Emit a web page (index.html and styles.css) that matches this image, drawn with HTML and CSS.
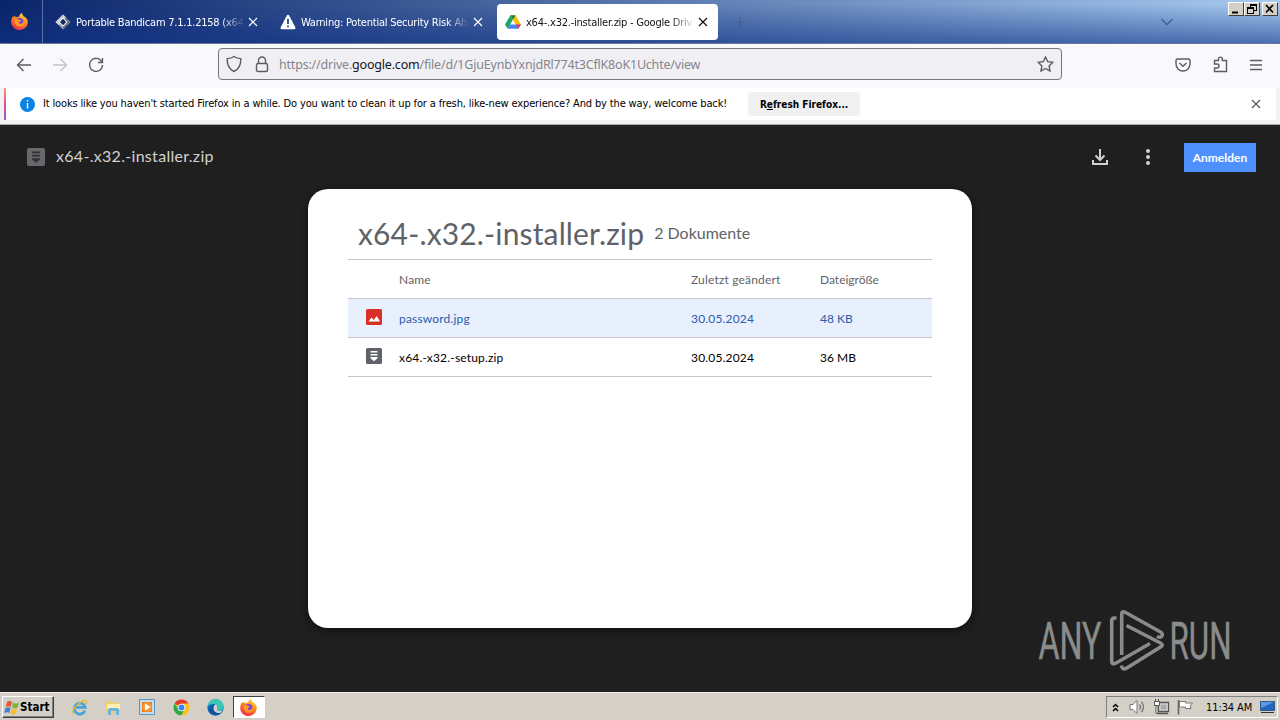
FILE: index.html
```
<!DOCTYPE html>
<html lang="de">
<head>
  <meta charset="UTF-8">
  <title>x64-.x32.-installer.zip - Google Drive</title>
  <link rel="stylesheet" href="styles.css">
</head>
<body>

  <!-- Shared icon shapes -->
  <svg class="defs" width="0" height="0">
    <defs>
      <linearGradient id="fire" x1="0.8" y1="0" x2="0.3" y2="1">
        <stop offset="0" stop-color="#ffe33c"/>
        <stop offset="0.45" stop-color="#ff8a1c"/>
        <stop offset="1" stop-color="#f02a50"/>
      </linearGradient>
      <symbol id="firefox" viewBox="0 0 16 16">
        <path fill="url(#fire)" d="M10 0c.8 1 1.4 1.800 1.500 2.800C14.500 4 16 6.500 15.800 9c-.3 4-3.600 7-7.700 7C3.700 16 .2 12.700.2 8.400c0-2 .6-4 1.800-5.600l.2 1.300L4 2.300l.3 1.900c1-.6 2.200-.7 3.200-.4C7.600 2.200 8.600.8 10 0z"/>
        <circle cx="8" cy="8.600" r="3.800" fill="#7a45d8"/>
        <path fill="#ff9820" d="M3.500 6.500c1.500-1.300 3-.8 4.400.1l1.500.2c-.2 1-1.400 1.200-2 1.600-.2 1.300.8 2 2.200 1.700 1.500-.3 2.300-1.500 2.200-3C13 8.800 12.400 13 8.400 13c-3.300 0-5.400-3-4.900-6.500z"/>
      </symbol>
      <symbol id="close" viewBox="0 0 10 10">
        <path d="M1 1l8 8M9 1L1 9" fill="none" stroke="currentColor" stroke-width="1.200"/>
      </symbol>
      <symbol id="zip" viewBox="0 0 16 16">
        <rect width="16" height="16" rx="1.500"/>
        <path class="zip-mark" d="M4.500 3h7v1.600h-7zM4.500 6h7v1.600h-7zM4.500 9h7v1.200L8 13.200l-3.500-3z"/>
      </symbol>
    </defs>
  </svg>

  <!-- Tab strip -->
  <header class="tabstrip">
    <div class="firefox-view"><svg width="17" height="17"><use href="#firefox"/></svg></div>
    <div class="tab">
      <svg class="favicon" viewBox="0 0 16 16">
        <path d="M8 .5L15.500 8 8 15.500.5 8z" fill="#9ea4b2"/>
        <path d="M8 .5L15.500 8 8 15.500z" fill="#6d7484"/>
        <path d="M8 .5L.5 8l3 3L11 3.500z" fill="#c9cdd6"/>
        <path d="M8 3.500L12.500 8 8 12.500 3.500 8z" fill="#fff"/>
        <path d="M8 4.800L11.200 8 8 11.200 4.800 8z" fill="#14295f"/>
      </svg>
      <span class="title">Portable Bandicam 7.1.1.2158 (x64</span>
      <svg class="x"><use href="#close"/></svg>
    </div>
    <div class="tab">
      <svg class="favicon" viewBox="0 0 16 16">
        <path d="M8 .8c.7 0 1 .3 1.300.9l6 11.500c.5 1 0 2-1.100 2H1.800c-1.100 0-1.600-1-1.100-2l6-11.500C7 1.100 7.300.8 8 .8z" fill="#fff"/>
        <path d="M8 5v5M8 11.500v1.800" stroke="#1c3a80" stroke-width="1.700"/>
      </svg>
      <span class="title">Warning: Potential Security Risk Ah</span>
      <svg class="x"><use href="#close"/></svg>
    </div>
    <div class="tab active">
      <svg class="favicon" viewBox="0 0 16 16">
        <path d="M5.500 1.200L0 10.600l2.700 4.200 5.300-9.200z" fill="#20a464"/>
        <path d="M5.500 1.200h5L16 10.600h-5.300z" fill="#fbbc04"/>
        <path d="M5.500 1.200h5L8 5.600z" fill="#188038"/>
        <path d="M5 10.600h11l-2.700 4.200H2.700z" fill="#4285f4"/>
        <path d="M10.800 10.600H16l-2.700 4.200z" fill="#ea4335"/>
      </svg>
      <span class="title">x64-.x32.-installer.zip - Google Driv</span>
      <svg class="x"><use href="#close"/></svg>
    </div>
    <svg class="plus" width="10" height="10"><path d="M5 0v10M0 5h10" stroke="#4a5f90" stroke-width="1.200"/></svg>
    <svg class="all-tabs" width="12" height="8"><path d="M.5 1L6 6.500 11.500 1" fill="none" stroke="#48669c" stroke-width="1.600"/></svg>
    <div class="window-buttons">
      <span class="wbtn"><svg width="14" height="12"><path d="M3 8.500h6v2H3z"/></svg></span>
      <span class="wbtn"><svg width="14" height="12"><path d="M5 1h7v7h-3V11H2V4h3zM6 3v1h3v3h2V3zM3 6v4h5V6z" fill-rule="evenodd"/></svg></span>
      <span class="wbtn last"><svg width="14" height="12"><path d="M3 2l7 7.500M10 2L3 9.500" stroke="#000" stroke-width="1.700"/></svg></span>
    </div>
  </header>

  <!-- Navigation toolbar -->
  <nav class="toolbar">
    <div class="nav-buttons">
      <svg width="16" height="14"><path d="M15 7H1.500M7.500 1L1.500 7l6 6"/></svg>
      <svg class="off" width="16" height="14"><path d="M1 7h13.500M8.500 1l6 6-6 6"/></svg>
      <svg width="16" height="16"><path d="M13.600 4.500A6.500 6.500 0 1 0 14.500 8M14.500 1v4.500H10"/></svg>
    </div>
    <div class="urlbar">
      <svg width="16" height="18"><path d="M8 1.500C6 3 3.500 3.500 1.200 3.600 1 9.500 2.500 14 8 16.500c5.500-2.500 7-7 6.800-12.900C12.500 3.500 10 3 8 1.500z"/></svg>
      <svg class="lock" width="14" height="17"><rect x="1.500" y="7.500" width="11" height="8" rx="1.500"/><path d="M3.500 7.500V4.500a3.500 3.500 0 0 1 7 0v3"/></svg>
      <span class="url">https://drive.<b>google.com</b>/file/d/1GjuEynbYxnjdRl774t3CflK8oK1Uchte/view</span>
      <svg class="star" width="17" height="16" viewBox="0 0 17 16"><path d="M8.500 1l2.200 4.700 5.100.6-3.700 3.600.9 5.100-4.500-2.500L4 15l.9-5.100L1.200 6.300l5.100-.6z"/></svg>
    </div>
    <div class="tools">
      <svg width="16" height="14"><path d="M2.500 1h11a1.500 1.500 0 0 1 1.500 1.500V6a7 7 0 0 1-14 0V2.500A1.500 1.500 0 0 1 2.500 1zM4.500 5L8 8.300 11.500 5"/></svg>
      <svg width="15" height="17"><path d="M5.500 4.500V3a1.900 1.900 0 0 1 3.800 0v1.500h4.200v11H1.500V12H4a2 2 0 0 0 0-4H1.500V4.500z"/></svg>
      <svg width="12" height="12"><path d="M0 1.500h12M0 6h12M0 10.500h12"/></svg>
    </div>
  </nav>

  <!-- Notification bar -->
  <div class="notice-wrap">
    <div class="notice">
      <svg width="15" height="15"><circle cx="7.500" cy="7.500" r="7.500" fill="#0a84e0"/><path d="M7.500 3v1.500M7.500 6v5.500" stroke="#fff" stroke-width="1.300"/></svg>
      <span class="message">It looks like you haven't started Firefox in a while. Do you want to clean it up for a fresh, like-new experience? And by the way, welcome back!</span>
      <button><span>R<u>e</u>fresh Firefox...</span></button>
      <svg class="dismiss" width="10" height="10"><use href="#close"/></svg>
    </div>
  </div>

  <!-- Drive viewer -->
  <main>
    <div class="viewer-bar">
      <svg class="zip-dark" width="18" height="18"><use href="#zip"/></svg>
      <span class="file-name">x64-.x32.-installer.zip</span>
      <svg class="download" width="16" height="16"><path d="M8 0v11M3.500 6.500L8 11l4.500-4.500M1 11v4h14v-4" fill="none" stroke="#d0d0d0" stroke-width="2"/></svg>
      <svg class="more" width="4" height="16" fill="#d0d0d0"><circle cx="2" cy="2" r="2"/><circle cx="2" cy="8" r="2"/><circle cx="2" cy="14" r="2"/></svg>
      <button class="signin"><span>Anmelden</span></button>
    </div>

    <section class="card">
      <div class="card-head">
        <h1>x64-.x32.-installer.zip</h1>
        <span class="count">2 Dokumente</span>
      </div>
      <div class="row head">
        <span></span><span>Name</span><span>Zuletzt geändert</span><span class="tight">Dateigröße</span>
      </div>
      <div class="row selected">
        <svg width="16" height="16"><rect width="16" height="16" rx="1.500" fill="#d93025"/><path d="M2.500 12.500l3-4 2.200 2.500 3-4 3.300 5.500z" fill="#fff"/></svg>
        <span>password.jpg</span><span>30.05.2024</span><span class="tight">48 KB</span>
      </div>
      <div class="row">
        <svg class="zip-light" width="16" height="16"><use href="#zip"/></svg>
        <span>x64.-x32.-setup.zip</span><span>30.05.2024</span><span class="tight">36 MB</span>
      </div>
    </section>

    <!-- Watermark over the page -->
    <svg class="watermark" width="200" height="64" viewBox="0 0 200 64">
      <text x="2.500" y="50" textLength="63" lengthAdjust="spacingAndGlyphs">ANY</text>
      <g fill="none" stroke="#8b8b8b" stroke-width="3.600" stroke-linejoin="round">
        <path d="M80.500 9h-2q-2.800 0-2.800 3v40q0 4 4 2.200L114 34.500"/>
        <path d="M85.700 46V5q0-3.500 3.500-1.700L124.500 23q3 2 1 4.500-1.500 1.500-4.500-.3"/>
        <path d="M90.500 16.500L124.500 34q3.500 2 0 4L90 59.500q-4 1.500-4.500-3"/>
      </g>
      <text x="133.500" y="50" textLength="62" lengthAdjust="spacingAndGlyphs">RUN</text>
    </svg>
  </main>

  <!-- Taskbar -->
  <footer class="taskbar">
    <div class="start">
      <svg width="16" height="15" viewBox="0 0 16 15"><path d="M3 2q3-2 5 0L6.800 7q-2-1.500-5 0z" fill="#e8582a"/><path d="M9 2.500q3 2 6 0L13.600 7.500q-3 2-5.500 0z" fill="#7db43c"/><path d="M1.500 8q3-1.500 5 0l-1.300 5q-2-1.500-5 0z" fill="#3f83d2"/><path d="M7.600 8.500q3 2 5.600 0L12 13.500q-3 2-5.700 0z" fill="#f6c02c"/></svg>
      <span>Start</span>
    </div>
    <div class="launch">
      <svg width="17" height="17"><path d="M14 11.500A5.500 5.500 0 1 1 14.200 8.300H5" fill="none" stroke="#42a5dc" stroke-width="2.700"/><path d="M2 15C-1 12 9 1 15 1.500q2 1-1 4" fill="none" stroke="#e8b83a" stroke-width="1.300"/></svg>
      <svg width="17" height="17"><path d="M1 2h5l1 1.500h8V14H1z" fill="#edcf73"/><path d="M2 5h13v5H2z" fill="#fff0b0"/><path d="M3 16v-5q0-2 2-2h7q2 0 2 2v5h-3v-4H6v4z" fill="#69b5dc"/></svg>
      <svg width="17" height="17"><path d="M.5.500h15v15H.5z" fill="#c8dcec" stroke="#5a93c0"/><path d="M3 3h10v10H3z" fill="#f08020"/><circle cx="8" cy="8" r="4.500" fill="#f59a35"/><path d="M6 4.500L11.500 8 6 11.500z" fill="#fff"/></svg>
      <svg width="17" height="17" viewBox="0 0 16 16"><circle cx="8" cy="8" r="7.500" fill="#fbc116"/><path d="M8 8L1.500 4.300A7.500 7.500 0 0 1 14.500 4.300H8z" fill="#e33b2e"/><path d="M1.500 4.300A7.500 7.500 0 0 0 7.500 15.500L11 9.800 5 9.500z" fill="#2da94f"/><circle cx="8" cy="8" r="3.600" fill="#fff"/><circle cx="8" cy="8" r="2.800" fill="#3e82f0"/></svg>
      <svg width="17" height="17" viewBox="0 0 16 16"><circle cx="8" cy="8" r="7.700" fill="#0c6fbd"/><path d="M.5 7C1.500 2.500 4.500.3 8 .3c4.500 0 7.700 3 7.700 6.700 0 2.700-2.300 4-4.600 4-1.500 0-2.400-.6-1.500-1.700C11 7 9 4.600 6 4.600 3.500 4.600 1.500 5.500.5 7z" fill="#39c6b4"/><path d="M9.500 9.300C8.500 11 12 12 15 10l-2 3c-4 1-7.500-1-7-5 .2-1.400 1-2.400 2-3 2 1 2.300 3 1.500 4.300z" fill="#d4d0c8"/><path d="M6 8c-.5 4 3 6 7 5-4 4-10 2.500-11-2C1.500 8 4 5 8 5 6.800 5.500 6.200 6.600 6 8z" fill="#1353a0"/></svg>
    </div>
    <div class="task"><svg width="17" height="17"><use href="#firefox"/></svg></div>
    <div class="tray">
      <svg width="7" height="9"><path d="M1 4l2.500-2.500L6 4M1 8l2.500-2.500L6 8" fill="none" stroke="#000" stroke-width="1.500"/></svg>
      <svg class="speaker" width="17" height="16"><path d="M1 5.500h3L8 1.500v13L4 10.500H1z" fill="#fff" stroke="#777"/><path d="M10.500 5.500q2 2.500 0 5M12.500 3q4 5 0 10" fill="none" stroke="#777" stroke-width="1.300"/></svg>
      <svg class="network" width="17" height="16"><path d="M5.500 3.500h10v9h-10zM5 14.500h10" fill="#ddd" stroke="#555" stroke-width="1.300"/><path d="M7.500 5.500h6v5h-6z" fill="#aaa"/><path d="M1.500 2.500h5v4h-5zM2.500 0v2M5.500 0v2M3 6.500h2v8H3z" fill="#fff" stroke="#555"/></svg>
      <svg class="flag" width="16" height="16"><path d="M1.500 1v14.500" stroke="#666" stroke-width="1.600"/><path d="M2.500 2.500h6v1.500H15.500L13 7l1 2.500H8.500V8h-6z" fill="#fff" stroke="#777"/></svg>
      <span class="clock">11:34 AM</span>
      <svg class="desktop" width="15" height="13"><path d="M.5.500h14v9H.5z" fill="#2564bb" stroke="#31598e"/><path d="M1 1h13L1 7z" fill="#5b9ae4"/><path d="M1 11.500h13" stroke="#333"/></svg>
    </div>
  </footer>

</body>
</html>
```
FILE: styles.css
```
* {
  box-sizing: border-box;
}
body {
  margin: 0;
  width: 1280px;
  height: 720px;
  overflow: hidden;
  display: flex;
  flex-direction: column;
  font-family: "DejaVu Sans Condensed", "DejaVu Sans", sans-serif;
  font-size: 11px;
  color: #000;
}
svg {
  display: block;
  flex: none;
}
.defs {
  position: absolute;
}
span, h1 {
  white-space: nowrap;
}
button {
  border: 0;
  padding: 0;
  font-family: inherit;
}

/* Tab strip */
.tabstrip {
  height: 44px;
  flex: none;
  display: flex;
  background: linear-gradient(to bottom, rgba(16, 50, 125, 0) 10%, rgba(16, 50, 135, 0.6) 100%), linear-gradient(to right, #0a246a, #a6caf0);
  border-bottom: 1px solid #6a7896;
}
.firefox-view {
  width: 43px;
  padding: 13px 0 0 11px;
  border-right: 1px solid #5870a5;
}
.tab {
  width: 221px;
  height: 36px;
  margin: 4px 0 0 4px;
  padding: 0 10px 0 8px;
  display: flex;
  align-items: center;
  color: #fff;
}
.tab.active {
  background: #fff;
  color: #111;
  border-radius: 4px;
}
.favicon {
  width: 16px;
  height: 16px;
  margin-right: 5px;
}
.title {
  width: 169px;
  padding-top: 1px;
  letter-spacing: -0.23px;
  -webkit-mask-image: linear-gradient(to right, #000 145px, transparent 169px);
  mask-image: linear-gradient(to right, #000 145px, transparent 169px);
}
.x {
  width: 10px;
  height: 10px;
  margin-left: 3px;
}
.plus {
  margin: 17px 0 0 17px;
}
.all-tabs {
  margin: 18px 0 0 auto;
}
.window-buttons {
  display: flex;
  margin: 2px 2px 0 55px;
}
.wbtn {
  width: 16px;
  height: 14px;
  background: #d4d0c8;
  border: 1px solid;
  border-color: #fff #404040 #404040 #fff;
}
.wbtn.last {
  margin-left: 2px;
}

/* Toolbar */
.toolbar {
  height: 44px;
  flex: none;
  display: flex;
  background: #f9f9fb;
}
.toolbar svg {
  fill: none;
  stroke: #5b5b66;
  stroke-width: 1.4;
}
.nav-buttons {
  width: 218px;
  display: flex;
  align-items: center;
  gap: 20px;
  padding: 0 0 3px 16px;
}
.nav-buttons .off {
  stroke: #c3c3c8;
}
.urlbar {
  width: 844px;
  height: 32px;
  margin-top: 4px;
  padding: 0 7px;
  display: flex;
  align-items: center;
  background: #f0f0f4;
  border: 1px solid #74747c;
  border-radius: 4px;
}
.lock {
  margin-left: 13px;
}
.url {
  margin-left: 10px;
  font-size: 12.5px;
  font-family: "Noto Sans", sans-serif;
  letter-spacing: -0.2px;
  color: #85858b;
}
.url b {
  font-weight: normal;
  color: #15141a;
}
.star {
  margin-left: auto;
}
.tools {
  margin: 0 18px 3px auto;
  display: flex;
  align-items: center;
  gap: 22px;
}

/* Notification */
.notice-wrap {
  height: 37px;
  flex: none;
  padding: 0 4px;
  background: #f2f2f4;
  border-bottom: 1px solid #aaa;
}
.notice {
  height: 32px;
  padding: 0 15px 0 14px;
  display: flex;
  align-items: center;
  background: #fff;
  border-left: 2px solid;
  border-image: linear-gradient(#f39a78, #e04e9a, #9060d0) 1;
}
.message {
  margin: 0 0 2px 8px;
  letter-spacing: -0.145px;
}
.notice button {
  width: 112px;
  height: 24px;
  margin-left: 21px;
  background: #f0f0f1;
  border-radius: 4px;
  font-size: 10px;
  font-weight: bold;
}
.dismiss {
  margin-left: auto;
  color: #5b5b66;
}

/* Drive viewer */
main {
  height: 567px;
  flex: none;
  position: relative;
  background: #1f1f1f;
  font-family: Lato, sans-serif;
}
.viewer-bar {
  height: 64px;
  padding: 0 24px 0 27px;
  display: flex;
  align-items: center;
}
.zip-dark {
  fill: #66686b;
  --mark: #303236;
}
.zip-light {
  fill: #5f6368;
  --mark: #fff;
}
.zip-mark {
  fill: var(--mark);
}
.file-name {
  margin: 0 0 3px 11px;
  font-size: 16px;
  letter-spacing: 0.3px;
  color: #d2d2d2;
}
.download {
  margin-left: auto;
}
.more {
  margin: 0 34px 0 38px;
}
.signin {
  width: 72px;
  height: 29px;
  background: #4d90fe;
  color: #fff;
  font-size: 12px;
  font-weight: bold;
}
.card {
  width: 664px;
  height: 439px;
  margin: 0 auto;
  padding: 20px 40px;
  background: #fff;
  border-radius: 20px;
  box-shadow: 0 3px 10px rgba(0, 0, 0, 0.5);
}
.card-head {
  height: 51px;
  padding: 0 0 3px 10px;
  display: flex;
  align-items: center;
  border-bottom: 1px solid #c7c7c7;
  color: #5f6368;
}
h1 {
  margin: 0;
  font-size: 30px;
  font-weight: normal;
  letter-spacing: 0.14px;
}
.count {
  margin-left: 10px;
  font-size: 16px;
}
.row {
  height: 39px;
  padding: 1px 0 0 18px;
  display: grid;
  grid-template-columns: 33px 292px 129px 1fr;
  align-items: center;
  border-bottom: 1px solid #c7c7c7;
  font-size: 12px;
  letter-spacing: 0.17px;
}
.row svg {
  margin-bottom: 3px;
}
.row.head {
  color: #5f6368;
}
.row.selected {
  background: #e8f0fe;
  color: #2a5caa;
}
.row .tight {
  letter-spacing: 0;
}
.watermark {
  position: absolute;
  left: 1036px;
  top: 484px;
}
.watermark text {
  font-family: Roboto, sans-serif;
  font-size: 52px;
  fill: #8b8b8b;
  stroke: #8b8b8b;
  stroke-width: 0.5;
}

/* Taskbar */
.taskbar {
  height: 28px;
  flex: none;
  display: flex;
  align-items: center;
  padding: 1px 2px 0;
  background: #d4d0c8;
  border-top: 1px solid #f4f2ec;
}
.start {
  width: 52px;
  height: 22px;
  padding-left: 1px;
  display: flex;
  align-items: center;
  border: 1px solid;
  border-color: #fff #404040 #404040 #fff;
  box-shadow: inset -1px -1px #808080;
  font-weight: bold;
  font-size: 11.5px;
}
.launch {
  display: flex;
  gap: 17px;
  margin-left: 17px;
}
.task {
  width: 32px;
  height: 22px;
  margin-left: 9px;
  padding: 2px 0 0 6px;
  background: #fff;
  border: 1px solid;
  border-color: #404040 #fff #fff #404040;
}
.tray {
  width: 172px;
  height: 22px;
  margin-left: auto;
  padding-left: 5px;
  display: flex;
  align-items: center;
  border: 1px solid;
  border-color: #808080 #fff #fff #808080;
}
.speaker {
  margin-left: 10px;
}
.network {
  margin-left: 7px;
}
.flag {
  margin-left: 7px;
}
.clock {
  margin-left: 13px;
  letter-spacing: -0.1px;
}
.desktop {
  margin: 0 2px 0 auto;
}
```
